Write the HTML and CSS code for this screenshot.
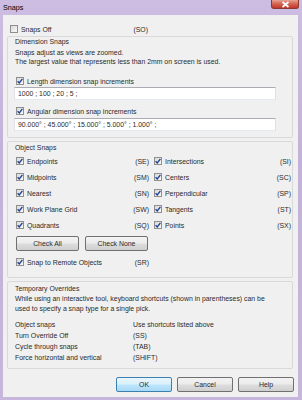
FILE: index.html
```html
<!DOCTYPE html>
<html lang="en">
<head>
    <meta charset="UTF-8">
    <title>Snaps</title>
    <link rel="stylesheet" href="styles.css">
</head>
<body>

    <div class="window">
        <div class="titlebar">
            <span class="title">Snaps</span>
            <span class="close">
                <svg width="9" height="7" viewBox="0 0 9 7"><path d="M1.5 1 L7.5 6 M7.5 1 L1.5 6" stroke="#fff" stroke-width="1.7"/></svg>
            </span>
        </div>

        <div class="client">
            <div class="opt top-opt">
                <span class="cb"></span><span class="lbl">Snaps Off</span><span class="key">(SO)</span>
            </div>

            <div class="group dim">
                <p class="head">Dimension Snaps</p>
                <p class="note">Snaps adjust as views are zoomed.<br>The largest value that represents less than 2mm on screen is used.</p>
                <div class="opt len-opt">
                    <span class="cb"><svg width="6" height="6" viewBox="0 0 6 6"><path d="M0.6 3.2 L2.3 5 L5.4 0.8" fill="none" stroke="#1f3f8f" stroke-width="1.3"/></svg></span>
                    <span class="lbl">Length dimension snap increments</span>
                </div>
                <div class="field">1000 ; 100 ; 20 ; 5 ;</div>
                <div class="opt ang-opt">
                    <span class="cb"><svg width="6" height="6" viewBox="0 0 6 6"><path d="M0.6 3.2 L2.3 5 L5.4 0.8" fill="none" stroke="#1f3f8f" stroke-width="1.3"/></svg></span>
                    <span class="lbl">Angular dimension snap increments</span>
                </div>
                <div class="field ang">90.000° ; 45.000° ; 15.000° ; 5.000° ; 1.000° ;</div>
            </div>

            <div class="group obj">
                <p class="head">Object Snaps</p>
                <div class="snap-grid">
                    <div class="opt"><span class="cb"><svg width="6" height="6" viewBox="0 0 6 6"><path d="M0.6 3.2 L2.3 5 L5.4 0.8" fill="none" stroke="#1f3f8f" stroke-width="1.3"/></svg></span><span class="lbl">Endpoints</span><span class="key">(SE)</span></div>
                    <div class="opt"><span class="cb"><svg width="6" height="6" viewBox="0 0 6 6"><path d="M0.6 3.2 L2.3 5 L5.4 0.8" fill="none" stroke="#1f3f8f" stroke-width="1.3"/></svg></span><span class="lbl">Intersections</span><span class="key">(SI)</span></div>
                    <div class="opt"><span class="cb"><svg width="6" height="6" viewBox="0 0 6 6"><path d="M0.6 3.2 L2.3 5 L5.4 0.8" fill="none" stroke="#1f3f8f" stroke-width="1.3"/></svg></span><span class="lbl">Midpoints</span><span class="key">(SM)</span></div>
                    <div class="opt"><span class="cb"><svg width="6" height="6" viewBox="0 0 6 6"><path d="M0.6 3.2 L2.3 5 L5.4 0.8" fill="none" stroke="#1f3f8f" stroke-width="1.3"/></svg></span><span class="lbl">Centers</span><span class="key">(SC)</span></div>
                    <div class="opt"><span class="cb"><svg width="6" height="6" viewBox="0 0 6 6"><path d="M0.6 3.2 L2.3 5 L5.4 0.8" fill="none" stroke="#1f3f8f" stroke-width="1.3"/></svg></span><span class="lbl">Nearest</span><span class="key">(SN)</span></div>
                    <div class="opt"><span class="cb"><svg width="6" height="6" viewBox="0 0 6 6"><path d="M0.6 3.2 L2.3 5 L5.4 0.8" fill="none" stroke="#1f3f8f" stroke-width="1.3"/></svg></span><span class="lbl">Perpendicular</span><span class="key">(SP)</span></div>
                    <div class="opt"><span class="cb"><svg width="6" height="6" viewBox="0 0 6 6"><path d="M0.6 3.2 L2.3 5 L5.4 0.8" fill="none" stroke="#1f3f8f" stroke-width="1.3"/></svg></span><span class="lbl">Work Plane Grid</span><span class="key">(SW)</span></div>
                    <div class="opt"><span class="cb"><svg width="6" height="6" viewBox="0 0 6 6"><path d="M0.6 3.2 L2.3 5 L5.4 0.8" fill="none" stroke="#1f3f8f" stroke-width="1.3"/></svg></span><span class="lbl">Tangents</span><span class="key">(ST)</span></div>
                    <div class="opt"><span class="cb"><svg width="6" height="6" viewBox="0 0 6 6"><path d="M0.6 3.2 L2.3 5 L5.4 0.8" fill="none" stroke="#1f3f8f" stroke-width="1.3"/></svg></span><span class="lbl">Quadrants</span><span class="key">(SQ)</span></div>
                    <div class="opt"><span class="cb"><svg width="6" height="6" viewBox="0 0 6 6"><path d="M0.6 3.2 L2.3 5 L5.4 0.8" fill="none" stroke="#1f3f8f" stroke-width="1.3"/></svg></span><span class="lbl">Points</span><span class="key">(SX)</span></div>
                </div>
                <div class="check-btns">
                    <span class="btn">Check All</span>
                    <span class="btn">Check None</span>
                </div>
                <div class="opt remote-opt"><span class="cb"><svg width="6" height="6" viewBox="0 0 6 6"><path d="M0.6 3.2 L2.3 5 L5.4 0.8" fill="none" stroke="#1f3f8f" stroke-width="1.3"/></svg></span><span class="lbl">Snap to Remote Objects</span><span class="key">(SR)</span></div>
            </div>

            <div class="group temp">
                <p class="head">Temporary Overrides</p>
                <p class="text">While using an interactive tool, keyboard shortcuts (shown in parentheses) can be<br>used to specify a snap type for a single pick.</p>
                <div class="keys">
                    <span>Object snaps</span><span>Use shortcuts listed above</span>
                    <span>Turn Override Off</span><span>(SS)</span>
                    <span>Cycle through snaps</span><span>(TAB)</span>
                    <span>Force horizontal and vertical</span><span>(SHIFT)</span>
                </div>
            </div>

            <div class="dlg-btns">
                <span class="btn ok">OK</span>
                <span class="btn">Cancel</span>
                <span class="btn">Help</span>
            </div>
        </div>
    </div>

</body>
</html>
```

FILE: styles.css
```css
*{
    margin: 0;
    padding: 0;
    box-sizing: border-box;
}

body{
    font-family: "Liberation Sans", Arial, sans-serif;
    font-size: 6.9px;
    color: #2a2a2a;
    background: #fff;
}

.window{
    width: 302px;
    height: 400px;
    display: flex;
    flex-direction: column;
    padding: 0 4px 3px 3px;
    background: linear-gradient(180deg, #cdbde2 0%, #c3b1d9 40%, #c7b6db 100%);
}

.titlebar{
    height: 15px;
    display: flex;
    justify-content: space-between;
    align-items: flex-start;
}

.title{
    font-size: 7.2px;
    line-height: 15px;
    color: #000;
}

.close{
    width: 28px;
    height: 9px;
    margin-right: -1px;
    display: flex;
    align-items: center;
    justify-content: center;
    border: 1px solid #8a3a33;
    border-top: none;
    border-radius: 0 0 3px 3px;
    background: linear-gradient(180deg, #e8a192 0%, #d4624f 50%, #c2382a 100%);
}

.client{
    flex: 1;
    display: flex;
    flex-direction: column;
    padding: 0 5px 0 4px;
    background: #f0f0f0;
}

.opt{
    display: flex;
    align-items: center;
    height: 10px;
    white-space: nowrap;
}

.cb{
    flex: none;
    width: 8px;
    height: 8px;
    margin-right: 3px;
    display: flex;
    align-items: center;
    justify-content: center;
    border: 1px solid #8f8f8f;
    background: linear-gradient(135deg, #d8d8d8, #fbfbfb);
}

.lbl{
    flex: 1;
}

.top-opt{
    width: 138px;
    margin: 9px 0 2px 3px;
}

.group{
    border: 1px solid #d9d9d9;
    border-radius: 2px;
    padding: 0 7px 6px;
}

.head{
    line-height: 9px;
}

.note{
    line-height: 9px;
    margin-top: 2px;
    white-space: nowrap;
}

.dim .opt{
    margin-left: 1px;
}

.len-opt{
    margin-top: 10px;
}

.field{
    width: 262px;
    height: 13px;
    margin: 1px 0 0 -1px;
    padding-left: 3px;
    line-height: 11px;
    background: #fff;
    border: 1px solid #abadb3;
    border-color: #abadb3 #dbdfe6 #e3e9ef #e2e3ea;
}

.ang-opt{
    margin-top: 6px;
}

.field.ang{
    margin-top: 2px;
}

.obj{
    margin-top: 3px;
    padding-top: 1px;
    padding-bottom: 10px;
}

.snap-grid{
    display: grid;
    grid-template-columns: 133px 137px;
    column-gap: 5px;
    row-gap: 6px;
    margin: 4px 0 0 1px;
}

.check-btns{
    display: flex;
    gap: 6px;
    margin: 6px 0 0 1px;
}

.check-btns .btn{
    width: 63px;
}

.btn{
    height: 15px;
    display: flex;
    align-items: center;
    justify-content: center;
    border: 1px solid #707070;
    border-radius: 2px;
    background: linear-gradient(180deg, #f3f3f3 0%, #ebebeb 48%, #dddddd 52%, #cfcfcf 100%);
}

.remote-opt{
    width: 133px;
    margin: 6px 0 0 1px;
}

.temp{
    margin-top: 3px;
    padding-top: 2px;
    padding-bottom: 5px;
}

.text{
    line-height: 10px;
    margin-top: 1px;
    white-space: nowrap;
}

.keys{
    display: grid;
    grid-template-columns: 118px auto;
    line-height: 11px;
    margin-top: 5px;
}

.dlg-btns{
    display: flex;
    justify-content: flex-end;
    gap: 5px;
    margin: 8px -1px 0 0;
}

.dlg-btns .btn{
    width: 56px;
}

.ok{
    border-color: #3c7fb1;
    background: linear-gradient(180deg, #eaf6fd 0%, #d9f0fc 48%, #bee6fd 52%, #a7d9f5 100%);
}
```
